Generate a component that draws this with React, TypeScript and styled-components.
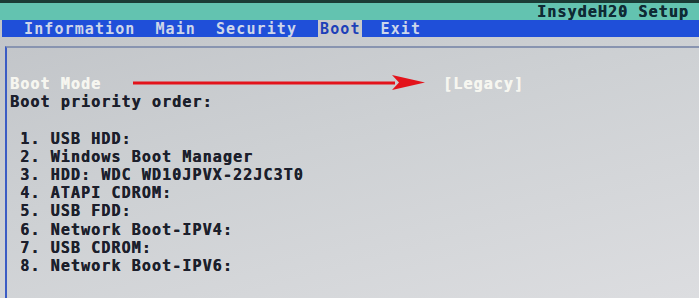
import React from "react";
import styled, { createGlobalStyle } from "styled-components";

const Global = createGlobalStyle`
  html, body { margin: 0; padding: 0; background: #c8cacd; }
  #root { width: 699px; height: 298px; }
`;

const Screen = styled.div`
  width: 699px;
  height: 298px;
  overflow: hidden;
  display: flex;
  flex-direction: column;
  font-family: "DejaVu Sans Mono", "Liberation Mono", monospace;
  font-weight: bold;
  font-size: 15px;
  letter-spacing: 1.1px;
  background: linear-gradient(165deg, #c0c3c7 0%, #cdd0d3 45%, #dcdde0 100%);
`;

const TitleBar = styled.div`
  height: 17px;
  border-top: 3px solid #1b3c36;
  background: #63c3b0;
  display: flex;
  align-items: center;
  justify-content: flex-end;
  padding-right: 10px;
  color: #0f2a34;
  text-shadow: 0.4px 0 0 currentColor;
`;

const MenuBar = styled.div`
  height: 17px;
  margin-left: 2px;
  background: #1f4fd9;
  display: flex;
  align-items: center;
  gap: 17px;
  padding-left: 20px;
`;

const MenuItem = styled.div<{ $active?: boolean; $shift?: number }>`
  height: 100%;
  display: flex;
  align-items: center;
  padding: 0 1px 0 2px;
  margin-left: ${(p) => p.$shift ?? 0}px;
  color: ${(p) => (p.$active ? "#1d3fb8" : "#cdd6ea")};
  background: ${(p) => (p.$active ? "#c9cacb" : "transparent")};
`;

const Body = styled.div`
  flex: 1;
  padding-top: 9px;
  display: flex;
`;

const Panel = styled.div`
  flex: 1;
  margin-left: 5px;
  border-top: 2px solid #8894b0;
  border-left: 2px solid #3b5cc4;
  padding: 27px 0 0 3px;
  display: flex;
  flex-direction: column;
`;

const Line = styled.div<{ $light?: boolean }>`
  height: 18.2px;
  line-height: 18.2px;
  white-space: pre;
  color: ${(p) => (p.$light ? "#f6f6f0" : "#1c1f2c")};
  text-shadow: 0.4px 0 0 currentColor;
`;

const SettingRow = styled.div`
  height: 18.2px;
  display: grid;
  grid-template-columns: 123px 293px 17px auto;
  align-items: center;
`;

const Blank = styled.div`
  height: 18.2px;
`;

const Arrow = () => (
  <svg width="293" height="18" viewBox="0 0 293 18">
    <path d="M0 6.5 L262 6.5 L262 9.5 L0 9.5 Z" fill="#e3131b" />
    <path d="M259 0 L292 7.5 L259 15 L266 7.5 Z" fill="#e3131b" />
  </svg>
);

const items = [
  "USB HDD:",
  "Windows Boot Manager",
  "HDD: WDC WD10JPVX-22JC3T0",
  "ATAPI CDROM:",
  "USB FDD:",
  "Network Boot-IPV4:",
  "USB CDROM:",
  "Network Boot-IPV6:",
];

export default function App() {
  return (
    <>
      <Global />
      <Screen>
        <TitleBar>InsydeH20 Setup</TitleBar>
        <MenuBar>
          <MenuItem>Information</MenuItem>
          <MenuItem>Main</MenuItem>
          <MenuItem>Security</MenuItem>
          <MenuItem $active $shift={3}>Boot</MenuItem>
          <MenuItem>Exit</MenuItem>
        </MenuBar>
        <Body>
          <Panel>
            <SettingRow>
              <Line $light>Boot Mode</Line>
              <Arrow />
              <span />
              <Line $light>[Legacy]</Line>
            </SettingRow>
            <Line>Boot priority order:</Line>
            <Blank />
            {items.map((t, i) => (
              <Line key={i}>{` ${i + 1}. ${t}`}</Line>
            ))}
          </Panel>
        </Body>
      </Screen>
    </>
  );
}
